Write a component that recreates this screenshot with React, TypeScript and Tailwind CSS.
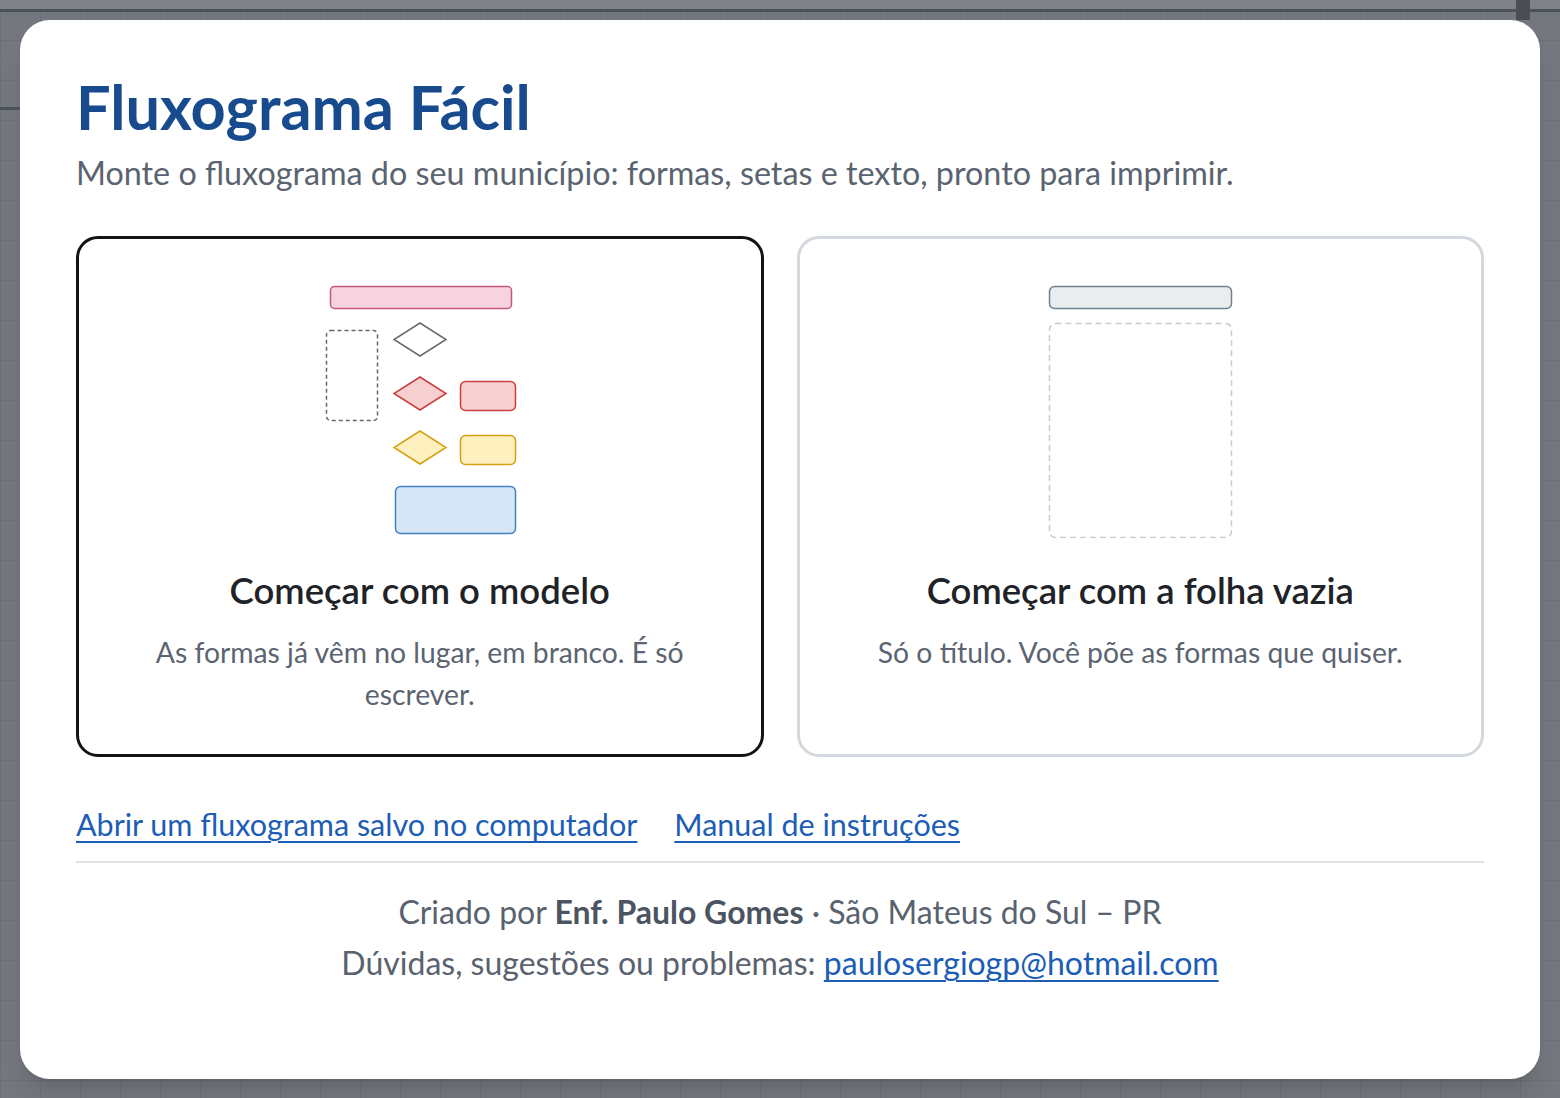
import React from 'react';

const font = { fontFamily: 'Lato, "Noto Sans", sans-serif' };

function TemplatePreview() {
  return (
    <svg width="200" height="256" viewBox="0 0 200 256" className="block">
      <rect x="10.5" y="4.5" width="181" height="22" rx="4" fill="#f7d3e0" stroke="#c4567f" strokeWidth="1.5" />
      <rect x="6.5" y="48.5" width="51" height="90" rx="4" fill="none" stroke="#666a70" strokeWidth="1.5" strokeDasharray="4 3" />
      <polygon points="100,41 126,57.5 100,74 74,57.5" fill="none" stroke="#666a70" strokeWidth="1.5" />
      <polygon points="100,95 126,111.5 100,128 74,111.5" fill="#f8cfd0" stroke="#c93f3f" strokeWidth="1.5" />
      <rect x="140.5" y="99.5" width="55" height="29" rx="5" fill="#f8cfd0" stroke="#c93f3f" strokeWidth="1.5" />
      <polygon points="100,149 126,165.5 100,182 74,165.5" fill="#fff0c0" stroke="#d2a20f" strokeWidth="1.5" />
      <rect x="140.5" y="153.5" width="55" height="29" rx="5" fill="#fff0c0" stroke="#d2a20f" strokeWidth="1.5" />
      <rect x="75.5" y="204.5" width="120" height="47" rx="5" fill="#d6e6f6" stroke="#4380c4" strokeWidth="1.5" />
    </svg>
  );
}

function BlankPreview() {
  return (
    <svg width="200" height="256" viewBox="0 0 200 256" className="block">
      <rect x="9.5" y="4.5" width="182" height="22" rx="5" fill="#e9edf0" stroke="#6f8390" strokeWidth="1.5" />
      <rect x="9.5" y="41.5" width="182" height="214" rx="6" fill="none" stroke="#c7cbd0" strokeWidth="1.5" strokeDasharray="6 4" />
    </svg>
  );
}

function StartCard({
  selected,
  preview,
  title,
  text,
}: {
  selected?: boolean;
  preview: React.ReactNode;
  title: string;
  text: string;
}) {
  return (
    <button
      className={
        'flex h-[521px] flex-col items-center rounded-[22px] border-[3px] bg-white px-[70px] pt-[43px] text-center ' +
        (selected ? 'border-[#111315]' : 'border-[#d3d8de]')
      }
    >
      {preview}
      <div className="mt-[30px] text-[36.5px] font-semibold leading-[44px] text-[#1f2328]">{title}</div>
      <div className="mt-[19px] max-w-[545px] text-[28.3px] leading-[42px] text-[#5b6471]">{text}</div>
    </button>
  );
}

export default function App() {
  return (
    <div
      className="relative h-[1098px] w-[1560px] overflow-hidden bg-[#74787e] bg-[linear-gradient(to_right,rgba(0,0,0,0.06)_1px,transparent_1px),linear-gradient(to_bottom,rgba(0,0,0,0.06)_1px,transparent_1px)] bg-[size:40px_40px]"
      style={font}
    >
      {/* app behind the dialog */}
      <div className="h-[12px] border-b-[3px] border-[#4a535b] bg-[#7e8288]" />
      <div className="mt-[95px] h-[3px] w-[20px] bg-[#4a535b]" />
      <div className="absolute right-[30px] top-0 h-[20px] w-[14px] bg-[#4a4e54]" />

      {/* dialog */}
      <div className="absolute inset-0 p-[20px]">
        <div className="flex h-[1059px] flex-col rounded-[30px] bg-white px-[56px] pt-[50px] shadow-xl">
          <h1 className="text-[61.3px] font-bold leading-[72px] text-[#174b8e]">Fluxograma Fácil</h1>
          <p className="mt-[9px] text-[32.3px] leading-[44px] text-[#5a6470]">
            Monte o fluxograma do seu município: formas, setas e texto, pronto para imprimir.
          </p>

          <div className="mt-[41px] grid grid-cols-2 gap-[33px]">
            <StartCard
              selected
              preview={<TemplatePreview />}
              title="Começar com o modelo"
              text="As formas já vêm no lugar, em branco. É só escrever."
            />
            <StartCard
              preview={<BlankPreview />}
              title="Começar com a folha vazia"
              text="Só o título. Você põe as formas que quiser."
            />
          </div>

          <div className="mt-[45px] flex gap-[37px] text-[30.5px] leading-[44px] text-[#1c5db6]">
            <a href="#" className="underline underline-offset-[5px] decoration-2">
              Abrir um fluxograma salvo no computador
            </a>
            <a href="#" className="underline underline-offset-[5px] decoration-2">
              Manual de instruções
            </a>
          </div>

          <div className="mt-[15px] border-t-2 border-[#dde2e7]" />

          <div className="mt-[23px] text-center text-[32px] leading-[51px] text-[#59626e]">
            <div>
              Criado por <b className="font-bold text-[#4b5460]">Enf. Paulo Gomes</b> · São Mateus do Sul – PR
            </div>
            <div>
              Dúvidas, sugestões ou problemas:{' '}
              <a href="#" className="text-[#1c5db6] underline underline-offset-[5px] decoration-2">
                paulosergiogp@hotmail.com
              </a>
            </div>
          </div>
        </div>
      </div>
    </div>
  );
}
